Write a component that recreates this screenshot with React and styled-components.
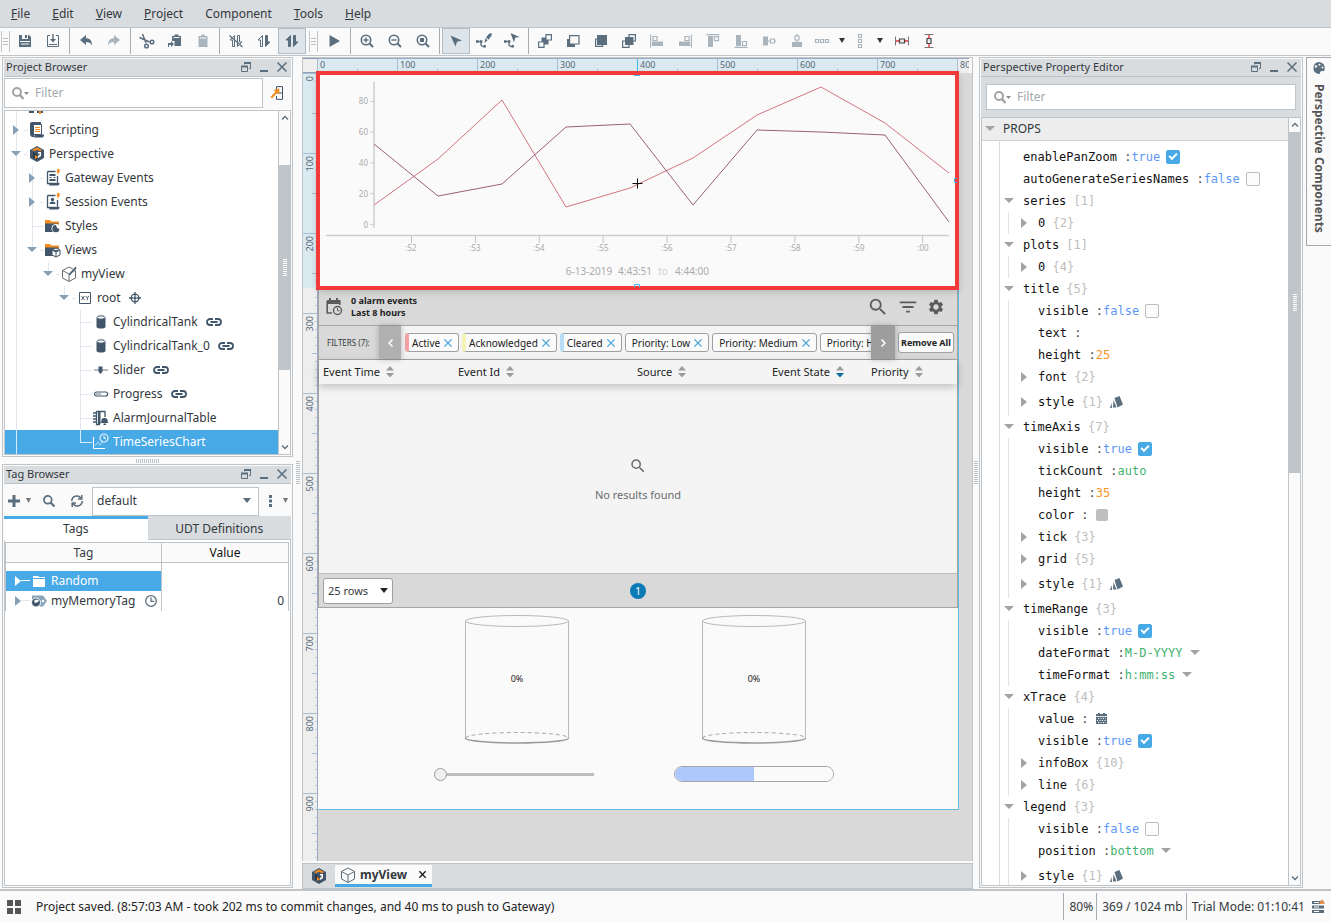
import React from "react";
import styled, { createGlobalStyle, css } from "styled-components";
import { MdSearch, MdFilterList, MdSettings } from "react-icons/md";

const c = {
  chrome: "#d9dcdf",
  panel: "#fafafa",
  line: "#bfc4c9",
  icon: "#5a6e7e",
  dark: "#41566a",
  pale: "#a9b4bd",
  orange: "#f38b1f",
  blue: "#47a9e6",
  text: "#33383d",
  guide: "#e3e6ee",
};

const GlobalStyle = createGlobalStyle`
  *, *::before, *::after { box-sizing: border-box; }
  body {
    margin: 0;
    background: ${c.panel};
    color: ${c.text};
    font-family: "Noto Sans", "Open Sans", sans-serif;
    font-size: 12px;
    line-height: 16px;
  }
  button, input, select { font: inherit; color: inherit; margin: 0; }
  button { border: 0; padding: 0; background: none; }
`;

/* ---------- icons ---------- */

const Svg = styled.svg`
  display: block;
  flex: none;
  overflow: visible;
`;

const Icon = ({ s = 16, color = c.icon, children }) => (
  <Svg width={s} height={s} viewBox="0 0 16 16" fill={color} aria-hidden="true">
    {children}
  </Svg>
);

const SaveIcon = () => (
  <Icon>
    <path d="M2 2h3v4h6V2h1l2 2v10H2z M8 2h2v3H8z" />
    <path d="M3 8.5h10" stroke="#fafafa" />
    <path d="M4 11h8" stroke="#fafafa" />
  </Icon>
);
const ImportIcon = () => (
  <Icon>
    <path d="M5 2.500H2.500v11h11v-11H11" fill="none" stroke={c.icon} />
    <path d="M7.300 1h1.400v5H11L8 9.500 5 6h2.300z M4 11h8v1H4z" />
  </Icon>
);
const UndoIcon = () => (
  <Icon>
    <path d="M2 7l6-5v3.200c4 0 6 2.500 6 7.300-1.500-2.600-3-3.500-6-3.500v3z" />
  </Icon>
);
const RedoIcon = () => (
  <Icon color={c.pale}>
    <path d="M14 7L8 2v3.200c-4 0-6 2.500-6 7.300 1.500-2.600 3-3.500 6-3.500v3z" />
  </Icon>
);
const CutIcon = () => (
  <Icon>
    <g fill="none" stroke={c.icon} strokeWidth="1.500">
      <path d="M3.500 1L7 10 M0.500 4.500L10.500 9" />
      <circle cx="13" cy="9" r="1.800" />
      <circle cx="7.500" cy="13" r="1.800" />
    </g>
  </Icon>
);
const CopyIcon = () => (
  <Icon>
    <path d="M5 3h2l1-1.500h3L12 3h2v10H7.500V8H5z" />
    <path d="M6.500 4.500h6" stroke="#fafafa" />
    <path d="M1 10h3V8l3 3-3 3v-2H2v2H1z" />
  </Icon>
);
const PasteIcon = () => (
  <Icon color={c.pale}>
    <path d="M3.500 3h2.500l.5-1.500h3L10 3h2.500v11h-9z" />
    <path d="M5 5h6" stroke="#fafafa" />
  </Icon>
);
const ArrowsIcon = ({ slash, fill }) => (
  <Icon>
    <path
      d="M6.500 2.500v11h-2V7H2z"
      fill={fill ? c.icon : "none"}
      stroke={c.icon}
      strokeLinejoin="round"
    />
    <path
      d="M9.500 13.500v-11h2V9H14z"
      fill={slash ? "none" : c.icon}
      stroke={c.icon}
      strokeLinejoin="round"
    />
    {slash && <path d="M1.500 2.500l13 11.500" stroke={c.icon} strokeWidth="1.300" />}
  </Icon>
);
const PlayIcon = () => (
  <Icon>
    <path d="M3.500 2l10.500 6-10.500 6z" />
  </Icon>
);
const ZoomIcon = ({ kind }) => (
  <Icon>
    <circle cx="7" cy="7" r="4.700" fill="none" stroke={c.icon} strokeWidth="1.600" />
    <path d="M10.500 10.500l3.500 3.500" stroke={c.icon} strokeWidth="2" />
    <path d={kind === "fit" ? "M5 5h4v4H5z" : "M4.500 6.300h5v1.400h-5z"} />
    {kind === "in" && <path d="M6.300 4.500h1.400v5H6.300z" />}
  </Icon>
);
const PointerIcon = () => (
  <Icon>
    <path d="M2.500 2.500l11.500 5-5 1.200L7.500 13.500z" />
  </Icon>
);
const PathIcon = ({ pen }) => (
  <Icon>
    <path d="M1 8.500h4v3.500q1 2 4 1.500" fill="none" stroke={c.icon} strokeWidth="1.400" />
    <path d="M0 7.300h2.400v2.400H0z M4 7.300h2.400v2.400H4z M7.500 12h2.400v2.600H7.500z" />
    {pen ? (
      <path d="M15.500 0l.3 2.200-3.300 4.500-2.500-2.200L13 .8z M9.300 5.300l2.300 2L8.500 10z" />
    ) : (
      <path d="M6.500 0l9 4-4.300.8L10 9.500z" />
    )}
  </Icon>
);
const StackIcon = ({ kind }) => {
  const hollow = { fill: "#fafafa", stroke: c.icon, strokeWidth: 1.2 };
  return (
    <Icon>
      {kind === "front" && (
        <>
          <path d="M4.500 4.500h7v7h-7z" />
          <path d="M9 1.600h5.400V7H9z M1.600 9H7v5.400H1.600z" {...hollow} />
        </>
      )}
      {kind === "up" && (
        <>
          <path d="M2 6h8v8H2z" />
          <path d="M4.600 2.600h9.400v8.400H4.600z" {...hollow} />
        </>
      )}
      {kind === "down" && (
        <>
          <path d="M2.600 6h7v7.400h-7z" {...hollow} />
          <path d="M4 2h10v10H4z" />
        </>
      )}
      {kind === "back" && (
        <>
          <path d="M8 1.600h6.400V8H8z M1.600 8H8v6.400H1.600z" {...hollow} />
          <path d="M4 4h8.500v8H4z" />
        </>
      )}
    </Icon>
  );
};
const AlignIcon = ({ kind }) => {
  const l = { fill: "none", stroke: c.pale, strokeWidth: 1.2 };
  const shapes = {
    left: ["M3 8.500h11V13H3z", "M1.600 1.500v13 M4 3.500h4v4H4z"],
    right: ["M2 8.500h11V13H2z", "M14.400 1.500v13 M8 3.500h4v4H8z"],
    top: ["M3 3h5v11H3z", "M1.500 1.600h13 M9.500 3.600h4v4h-4z"],
    bottom: ["M3 2h5v11H3z", "M1.500 14.400h13 M9.500 8.500h4v4h-4z"],
    middle: ["M2 3.500h5v9H2z", "M7 8h2 M9.500 6h4v4h-4z M13.500 8h1.500"],
    center: ["M3 9h10v5H3z", "M8 1v1.500 M6 3h4v4H6z M8 7v2"],
  };
  return (
    <Icon color={c.pale}>
      <path d={shapes[kind][0]} />
      <path d={shapes[kind][1]} {...l} />
    </Icon>
  );
};
const DistributeIcon = ({ vertical }) => (
  <Icon>
    <g
      fill="none"
      stroke={c.pale}
      strokeWidth="1.200"
      transform={vertical ? "rotate(90 8 8)" : undefined}
    >
      <path d="M1.500 6.500h3v3h-3z M6.500 6.500h3v3h-3z M11.500 6.500h3v3h-3z" />
    </g>
  </Icon>
);
const SizeIcon = ({ vertical }) => (
  <Icon>
    <g transform={vertical ? "rotate(90 8 8)" : undefined} fill="none">
      <path d="M1 8h4 M11 8h4" stroke="#f03030" strokeWidth="1.400" />
      <path d="M1.500 3.500v9 M14.500 3.500v9" stroke="#777" />
      <path d="M5.500 6h5v4h-5z" fill="#eee" stroke="#444" strokeWidth="1.200" />
    </g>
  </Icon>
);
const Caret = ({ color = "#8d8d8d", w = 8, dir = "down" }) => (
  <Svg width={dir === "right" ? 6 : w} height={dir === "right" ? 10 : 6} aria-hidden="true">
    <path
      d={dir === "right" ? "M0 0l6 5-6 5z" : `M0 0h${w}l-${w / 2} 5z`}
      fill={color}
    />
  </Svg>
);
const RestoreIcon = () => (
  <Svg width="10" height="10" fill="none" stroke={c.icon} aria-hidden="true">
    <path d="M0.500 4.500h6v5h-6z M3.500 .5v2 M9.500 1v5.500H8" />
    <path d="M0 4.500h7 M3 1h7" strokeWidth="2" />
  </Svg>
);
const MinimizeIcon = () => (
  <Svg width="8" height="10" aria-hidden="true">
    <path d="M0 8h8v2H0z" fill={c.icon} />
  </Svg>
);
const CloseIcon = ({ size = 10, color = c.icon, w = 1.5 }) => (
  <Svg width={size} height={size} viewBox="0 0 10 10" aria-hidden="true">
    <path d="M0.500 .5l9 9 M9.500 .5l-9 9" stroke={color} strokeWidth={w} />
  </Svg>
);
const FilterSearchIcon = () => (
  <Svg width="18" height="12" aria-hidden="true">
    <circle cx="5" cy="5" r="4" fill="none" stroke="#a3a3a3" strokeWidth="2" />
    <path d="M8 8l3.500 4" stroke="#a3a3a3" strokeWidth="2.500" />
    <path d="M12 5h5l-2.500 3z" fill="#8d8d8d" />
  </Svg>
);
const LinkIcon = () => (
  <Svg width="16" height="8" fill="none" stroke={c.dark} strokeWidth="1.800" aria-hidden="true">
    <path d="M7 1H4a3 3 0 0 0 0 6h3 M9 1h3a3 3 0 0 1 0 6H9 M4.500 4h7" />
  </Svg>
);
const JumpIcon = () => (
  <Icon>
    <path d="M6.500 6V1.600h6v12.800h-6V11 M6.500 8h6" fill="none" stroke={c.dark} />
    <path d="M9.500 3.500l-.5 6-1.700-1.800L2 13.500.5 12l5-5.500L3.500 5z" fill={c.orange} />
  </Icon>
);
const ScriptIcon = () => (
  <Icon color={c.dark}>
    <path d="M1 1.500Q1 0 3 0h9v12H5v3H3Q1 14 1 12z" />
    <path d="M4.500 2.500h8v10h-8z" fill="#fff" stroke={c.dark} />
    <path d="M6 5.500h5 M6 7.500h5 M6 9.500h5" stroke={c.orange} />
    <path d="M6 12.500h9q0 3-2 3H5z" />
  </Icon>
);
const PerspectiveIcon = () => (
  <Icon color={c.dark}>
    <path d="M8 0l7 4v8l-7 4-7-4V4z" />
    <path d="M8 1.200l5 2.800-2 1.200-3-1.500-3 1.500L3 4z" fill={c.orange} />
    <path d="M4 6l4 2v6L4 11.500z" fill="#26394a" />
    <path d="M6 8.500l3 3-3 1.500z" fill={c.orange} />
    <path d="M9 6h3v4l-3 2z" fill="#fff" />
    <path d="M8.500 7.500h2v2h-2z" fill={c.dark} />
  </Icon>
);
const EventsIcon = ({ session }) => (
  <Icon color={c.dark}>
    <path d="M2.500 1.500h8 M2.500 1.500v12h8 M12.500 6v7" fill="none" stroke={c.dark} strokeWidth="1.300" />
    <path d="M5 13h9.500q0 2.500-2 2.500H4z" />
    {session ? (
      <>
        <circle cx="7.500" cy="5.500" r="1.700" />
        <path d="M4.500 10q0-2.500 3-2.500t3 2.500z" />
      </>
    ) : (
      <path d="M4.500 4h6v2h-6z M4.500 7h2v1h-2z M8.500 7h2v1h-2z M4.500 9h6v2h-6z" />
    )}
    <path d="M12.500-1h2.500l-1 2h1.500L12 5l.7-2.800H11.500z" fill={c.orange} />
  </Icon>
);
const FolderIcon = ({ cube }) => (
  <Icon>
    <path d="M0 2h5l1 1.500h8V7H0z" fill={c.orange} />
    <path d="M0 5.500h13v8.500H0z" fill={c.dark} />
    {cube ? (
      <path
        d="M11 6l4 2v5l-4 2-4-2V8z M7 8l4 2 4-2 M11 10v5"
        fill="#fff"
        stroke={c.dark}
      />
    ) : (
      <>
        <circle cx="11" cy="10.500" r="4.500" fill="#fff" />
        <path d="M11 7a3.600 3.600 0 1 0 3.500 4L12 10z" fill={c.dark} />
      </>
    )}
  </Icon>
);
const CubeIcon = ({ pen }) => (
  <Icon>
    <path
      d="M8 1l6.500 3.500v7.500L8 15.500 1.500 12V4.500z M1.500 4.500L8 8l6.500-3.500 M8 8v7.500"
      fill="none"
      stroke={pen ? "#6d6d6d" : c.icon}
    />
    {pen && (
      <path d="M14.500 0.500L16 2 9 9.500l-2 .5.500-2z" fill={c.dark} stroke="#fff" strokeWidth=".5" />
    )}
  </Icon>
);
const RootIcon = () => (
  <Icon>
    <path d="M2.500 2.500h11v11h-11z" fill="#fff" stroke={c.dark} />
    <path
      d="M4.500 6l3 4 M7.500 6l-3 4 M8.800 6l1.500 2 1.500-2 M10.300 8v2.300"
      fill="none"
      stroke={c.dark}
      strokeWidth=".9"
    />
  </Icon>
);
const TargetIcon = () => (
  <Svg width="12" height="12" fill="none" stroke={c.dark} strokeWidth="1.300" aria-hidden="true">
    <circle cx="6" cy="6" r="3.800" />
    <circle cx="6" cy="6" r="1" />
    <path d="M6 0v4 M6 8v4 M0 6h4 M8 6h4" />
  </Svg>
);
const TankIcon = () => (
  <Icon>
    <path d="M3.500 4v8.500q0 2 4.500 2t4.500-2V4z" fill={c.dark} />
    <ellipse cx="8" cy="3.500" rx="4" ry="1.700" fill="#fff" stroke={c.dark} />
  </Icon>
);
const SliderIcon = () => (
  <Icon>
    <path d="M1 7h14v2H1z" fill="#b5bcc2" />
    <path d="M5.500 4.500h4v5l-2 2.500-2-2.500z" fill={c.dark} />
  </Icon>
);
const ProgressIcon = () => (
  <Icon>
    <rect x="1.600" y="6" width="13" height="4" rx="2" fill="#fff" stroke={c.dark} strokeWidth="1.200" />
    <path d="M3 7h5v2H3z" fill="#b5bcc2" />
  </Icon>
);
const AlarmIcon = () => (
  <Icon>
    <path d="M3.500 1.500h8.500V7 M3.500 1v13.500H7" fill="none" stroke={c.dark} strokeWidth="1.300" />
    <path d="M0 3h4 M0 6h4 M0 9h4 M0 12h4" stroke={c.dark} strokeWidth="1.300" />
    <path d="M5 2h2.500v12H5z M7.500 13q1-1 1-3 0-2 3-2t3 2q0 2 1 3z M10.500 13.500h2.500v1.500h-2.500z" fill={c.dark} />
  </Icon>
);
const ChartIcon = () => (
  <Icon>
    <path d="M0.500 3v11.500H12" fill="none" stroke="#fff" />
    <path d="M2 12l3-4 2 3 3-4" fill="none" stroke="#8ccbf2" strokeWidth="1.300" />
    <circle cx="11" cy="4" r="4" fill={c.blue} stroke="#e6f4fd" strokeWidth="1.200" />
    <path d="M11 1.500V4.300h2" fill="none" stroke="#fff" />
  </Icon>
);
const SpannerIcon = () => (
  <Icon color={c.dark}>
    <path d="M0 5h5v10H0z M8 5h6v10H8z" />
    <path d="M10 0h2v16h-2z" fill={c.orange} />
  </Icon>
);
const PlusIcon = () => (
  <Svg width="12" height="12" aria-hidden="true">
    <path d="M4.500 0h3v4.500H12v3H7.500V12h-3V7.500H0v-3h4.500z" fill={c.icon} />
  </Svg>
);
const MagnifierIcon = () => (
  <Svg width="12" height="12" fill="none" stroke={c.icon} aria-hidden="true">
    <circle cx="4.800" cy="4.800" r="3.900" strokeWidth="1.700" />
    <path d="M7.500 7.500l4 4" strokeWidth="2.200" />
  </Svg>
);
const RefreshIcon = () => (
  <Svg width="12" height="12" fill="none" stroke={c.icon} strokeWidth="1.500" aria-hidden="true">
    <path d="M0.800 6a5 5 0 0 1 9-3 M11.200 6a5 5 0 0 1-9 3 M10.800 0v4H7 M1.200 12V8H5" />
  </Svg>
);
const DotsIcon = () => (
  <Svg width="4" height="12" fill={c.icon} aria-hidden="true">
    <path d="M0 0h3v3H0z M0 4.500h3v3H0z M0 9h3v3H0z" />
  </Svg>
);
const ClosedFolderIcon = () => (
  <Icon color="#fff">
    <path d="M2 3h5l1 1h6v1H2z M2 6h12v8H2z" />
  </Icon>
);
const TagIcon = () => (
  <Icon color="#8aa6bd">
    <path d="M1 2.500h11l4 5.500-4 5.500H9L5 8 1 6z" />
    <circle cx="12" cy="8" r="1.200" fill="#fff" />
    <circle cx="5" cy="9.500" r="4.500" fill={c.dark} stroke="#fff" />
    <path d="M5 6.500l3 .5-1 2-3 1-1-2z" fill="#fff" />
  </Icon>
);
const ClockIcon = () => (
  <Svg width="12" height="12" fill="none" stroke={c.icon} strokeWidth="1.300" aria-hidden="true">
    <circle cx="6" cy="6" r="5.300" />
    <path d="M6 2.500V6.300h3" />
  </Svg>
);
const StyleIcon = () => (
  <Svg width="13" height="13" fill={c.icon} aria-hidden="true">
    <path d="M4.500 2L9.500 0 13 8.500 7.500 11.500z M3.500 4l3 7.500H3z M1.500 7l.5 5H0z" />
  </Svg>
);
const CalendarIcon = () => (
  <Svg width="12" height="12" aria-hidden="true">
    <path d="M0 1h11v10H0z M2 0h2v2H2z M7 0h2v2H7z" fill={c.icon} />
    <path d="M0 3.500h11" stroke="#dfe3e6" />
    <path
      d="M2 5.500h8 M1 7.500h9 M2 9.500h8"
      stroke="#fff"
      strokeWidth="1"
      strokeDasharray="1 1.500"
    />
  </Svg>
);
const PaletteIcon = () => (
  <Svg width="12" height="12" aria-hidden="true">
    <path d="M6 0a6 6 0 0 1 5.500 8q-.5 1.500-2 1Q7 8.500 7 11q-.3 1.500-2 .8A6 6 0 0 1 6 0z" fill={c.icon} />
    <circle cx="3" cy="4.500" r="1.200" fill="#fafafa" />
    <circle cx="6.500" cy="2.800" r="1" fill="#fafafa" />
    <circle cx="9.500" cy="5.500" r="1" fill="#fafafa" />
  </Svg>
);
const JournalIcon = () => (
  <Svg width="17" height="18" aria-hidden="true">
    <path d="M1.200 3h12.600v4 M1.200 3v12H6" fill="none" stroke="#5c5c5c" strokeWidth="1.600" />
    <path d="M1 2h13v4H1z M3 0h2v3H3z M10 0h2v3h-2z" fill="#5c5c5c" />
    <circle cx="11.500" cy="12.500" r="4" fill="#d9d9d9" stroke="#5c5c5c" strokeWidth="1.400" />
    <path d="M11.500 10v2.700h2" fill="none" stroke="#5c5c5c" />
  </Svg>
);
const SortIcon = ({ active }) => (
  <Svg width="8" height="12" aria-hidden="true">
    <path d="M4 0l4 4.500H0z" fill="#9b9b9b" />
    <path d="M0 7h8l-4 4.500z" fill={active ? "#0d6a9c" : "#9b9b9b"} />
  </Svg>
);
const ServerIcon = () => (
  <Svg width="13" height="13" aria-hidden="true">
    <path d="M0 1h12v3H0z M0 5.500h12v3H0z M0 10h12v3H0z" fill={c.icon} />
    <path d="M2 2.500h5 M2 7h5 M2 11.500h5" stroke="#fff" />
    <path d="M10-1l3 5H7z" fill="#e99148" />
  </Svg>
);
const WindowsIcon = () => (
  <Svg width="14" height="14" aria-hidden="true">
    <path d="M0 0h6v6H0z M8 0h6v6H8z M0 8h6v6H0z M8 8h6v6H8z" fill="#555" />
  </Svg>
);

/* ---------- shell ---------- */

const Shell = styled.div`
  display: flex;
  flex-direction: column;
  height: 100vh;
  overflow: hidden;
`;

const MenuBar = styled.nav`
  display: flex;
  flex: none;
  gap: 22px;
  height: 28px;
  padding: 0 11px;
  background: ${c.chrome};
  border-bottom: 1px solid ${c.line};
`;
const MenuButton = styled.button`
  &::first-letter {
    text-decoration: ${(p) => (p.$plain ? "none" : "underline")};
  }
`;

const Toolbar = styled.div`
  display: flex;
  flex: none;
  height: 28px;
  background: ${c.panel};
  border-bottom: 1px solid ${c.line};
`;
const ToolButton = styled.button`
  display: flex;
  flex: none;
  align-items: center;
  justify-content: center;
  width: ${(p) => p.$w || 28}px;
  height: 26px;
  ${(p) =>
    p.$on &&
    css`
      background: #dde4ea;
      border: 1px solid #b4bcc3;
    `}
`;
const ToolRule = styled.span`
  flex: none;
  width: 1px;
  height: 26px;
  margin: 0 2px;
  background: #a9adb1;
`;
const Handle = styled.span`
  flex: none;
  width: ${(p) => p.$w}px;
  display: flex;
  align-items: center;
  justify-content: center;
  &::before {
    content: "";
    width: 9px;
    height: 21px;
    border: solid ${c.line};
    border-width: 0 1px;
    background: repeating-linear-gradient(#b9bec3 0 1px, transparent 1px 3px) center / 5px 7px no-repeat;
  }
`;

const Main = styled.main`
  display: flex;
  flex: 1;
  min-height: 0;
  border-bottom: 2px solid ${c.line};
`;
const LeftColumn = styled.div`
  display: flex;
  flex-direction: column;
  flex: none;
  width: 293px;
  padding: 1px 0 1px 2px;
`;
const Grip = styled.div`
  flex: none;
  display: flex;
  align-items: center;
  justify-content: center;
  width: ${(p) => (p.$row ? "auto" : p.$w + "px")};
  height: ${(p) => (p.$row ? "7px" : "auto")};
  &::before {
    content: "";
    width: ${(p) => (p.$row ? 23 : 4)}px;
    height: ${(p) => (p.$row ? 4 : 23)}px;
    background: repeating-linear-gradient(
      ${(p) => (p.$row ? "90deg" : "180deg")},
      #bcc1c6 0 1px,
      transparent 1px 2px
    );
  }
`;

const Panel = styled.section`
  display: flex;
  flex-direction: column;
  flex: ${(p) => p.$flex || "none"};
  width: ${(p) => (p.$w ? p.$w + "px" : "auto")};
  min-height: 0;
  border: 1px solid ${c.line};
  background: ${c.panel};
  padding: 1px;
`;
const PanelHeader = styled.header`
  display: flex;
  flex: none;
  align-items: center;
  gap: 9px;
  height: 18px;
  padding: 0 4px 1px 2px;
  background: ${c.chrome};
  border-bottom: 1px solid ${c.line};
`;
const PanelTitle = styled.h2`
  flex: 1;
  margin: 0;
  font-size: 11px;
  font-weight: 400;
`;
const WindowButton = styled.button`
  display: flex;
`;
const Header = ({ title }) => (
  <PanelHeader>
    <PanelTitle>{title}</PanelTitle>
    <WindowButton aria-label="Float"><RestoreIcon /></WindowButton>
    <WindowButton aria-label="Minimize"><MinimizeIcon /></WindowButton>
    <WindowButton aria-label="Close"><CloseIcon /></WindowButton>
  </PanelHeader>
);

const FilterRow = styled.div`
  display: flex;
  flex: none;
  align-items: center;
  gap: 7px;
  padding: ${(p) => p.$pad || "1px 5px 2px 0"};
  background: ${(p) => p.$bg || "transparent"};
`;
const FilterBox = styled.label`
  display: flex;
  flex: 1;
  align-items: center;
  gap: 5px;
  min-width: 0;
  height: ${(p) => p.$h}px;
  padding: 0 7px;
  background: #fff;
  border: 1px solid ${c.line};
`;
const FilterInput = styled.input`
  flex: 1;
  min-width: 0;
  padding: 0;
  border: 0;
  outline: 0;
  background: none;
  &::placeholder {
    color: #a3a9ae;
    opacity: 1;
  }
`;

/* ---------- project tree ---------- */

const ScrollFrame = styled.div`
  display: flex;
  flex: 1;
  min-height: 0;
  background: #fff;
  border: 1px solid ${c.line};
`;
const Tree = styled.ul`
  display: flex;
  flex: 1;
  flex-direction: column;
  justify-content: flex-end;
  min-width: 0;
  margin: 0;
  padding: 0;
  overflow: hidden;
  list-style: none;
`;
const TreeItem = styled.li`
  display: flex;
  flex: none;
  align-items: center;
  height: 24px;
  padding-left: 3px;
  --guide: ${(p) => (p.$on ? "#d4ecfb" : c.guide)};
  background: ${(p) => (p.$on ? c.blue : "transparent")};
  color: ${(p) => (p.$on ? "#fff" : c.text)};
`;
const GuideCell = styled.span`
  display: flex;
  align-items: center;
  justify-content: center;
  flex: none;
  width: 16px;
  height: 24px;
  background: ${(p) =>
    p.$line
      ? `linear-gradient(var(--guide), var(--guide)) 8px 0 / 1px ${
          p.$line === "full" ? "100%" : "12px"
        } no-repeat`
      : "none"};
`;
const Stub = styled.span`
  flex: none;
  width: ${(p) => (p.$leaf ? 12 : 4)}px;
  height: 1px;
  margin: 0 1px 0 ${(p) => (p.$leaf ? -8 : 0)}px;
  background: var(--guide);
`;
const TreeLabel = styled.span`
  display: flex;
  align-items: center;
  gap: 8px;
  padding-left: 4px;
`;

const tree = [
  { level: 0, icon: <SpannerIcon />, label: "", line: "full" },
  { level: 0, icon: <ScriptIcon />, label: "Scripting", line: "full", arrow: "right" },
  { level: 0, icon: <PerspectiveIcon />, label: "Perspective", line: "full", arrow: "down" },
  { level: 1, icon: <EventsIcon />, label: "Gateway Events", line: "full", arrow: "right" },
  { level: 1, icon: <EventsIcon session />, label: "Session Events", line: "full", arrow: "right" },
  { level: 1, icon: <FolderIcon />, label: "Styles", line: "full" },
  { level: 1, icon: <FolderIcon cube />, label: "Views", line: "half", arrow: "down" },
  { level: 2, icon: <CubeIcon pen />, label: "myView", line: "half", arrow: "down" },
  { level: 3, icon: <RootIcon />, label: "root", line: "half", arrow: "down", after: <TargetIcon /> },
  { level: 4, icon: <TankIcon />, label: "CylindricalTank", line: "full", after: <LinkIcon /> },
  { level: 4, icon: <TankIcon />, label: "CylindricalTank_0", line: "full", after: <LinkIcon /> },
  { level: 4, icon: <SliderIcon />, label: "Slider", line: "full", after: <LinkIcon /> },
  { level: 4, icon: <ProgressIcon />, label: "Progress", line: "full", after: <LinkIcon /> },
  { level: 4, icon: <AlarmIcon />, label: "AlarmJournalTable", line: "full" },
  { level: 4, icon: <ChartIcon />, label: "TimeSeriesChart", line: "half", on: true },
];

const ScrollBar = styled.div`
  display: flex;
  flex: none;
  flex-direction: column;
  width: 12px;
  background: ${c.panel};
  border-left: 1px solid ${c.line};
`;
const ScrollButton = styled.button`
  display: flex;
  flex: none;
  align-items: center;
  justify-content: center;
  height: 14px;
`;
const ScrollGap = styled.div`
  flex: ${(p) => p.$grow} 0 0;
`;
const Thumb = styled.div`
  flex: ${(p) => p.$grow} 0 0;
  background: repeating-linear-gradient(#fff 0 1px, transparent 1px 2px) center / 4px 17px no-repeat,
    #bfc5c9;
`;
const Chevron = ({ up }) => (
  <Svg width="6" height="4" fill="none" stroke={c.icon} strokeWidth="1.300" aria-hidden="true">
    <path d={up ? "M0 3.500l3-3 3 3" : "M0 .5l3 3 3-3"} />
  </Svg>
);
const Scroll = ({ before, thumb, after }) => (
  <ScrollBar>
    <ScrollButton aria-label="Scroll up"><Chevron up /></ScrollButton>
    <ScrollGap $grow={before} />
    <Thumb $grow={thumb} />
    <ScrollGap $grow={after} />
    <ScrollButton aria-label="Scroll down"><Chevron /></ScrollButton>
  </ScrollBar>
);

/* ---------- tag browser ---------- */

const TagTools = styled.div`
  display: flex;
  flex: none;
  align-items: center;
  height: 32px;
  padding: 2px 1px 0 4px;
`;
const TagTool = styled.button`
  display: flex;
  align-items: center;
  gap: 6px;
  margin-right: ${(p) => p.$gap || 0}px;
`;
const MoreButton = styled.button`
  display: flex;
  align-items: center;
  gap: 10px;
  padding: 0 2px 0 10px;
`;
const SelectWrap = styled.span`
  display: flex;
  flex: ${(p) => (p.$w ? "none" : 1)};
  align-items: center;
  width: ${(p) => (p.$w ? p.$w + "px" : "auto")};
  height: ${(p) => p.$h}px;
  padding-right: ${(p) => p.$pr}px;
  background: #fff;
  border: 1px solid ${(p) => p.$line || c.line};
  border-radius: ${(p) => p.$r || 0}px;
`;
const Select = styled.select`
  flex: 1;
  min-width: 0;
  padding: 0 0 0 4px;
  border: 0;
  outline: 0;
  background: none;
  appearance: none;
  font-size: ${(p) => p.$size || 12}px;
`;
const Tabs = styled.div`
  display: flex;
  flex: none;
`;
const Tab = styled.button`
  flex: 1;
  height: 24px;
  background: ${(p) => (p.$on ? "#fff" : c.chrome)};
  border-top: 3px solid ${(p) => (p.$on ? c.blue : c.chrome)};
  border-bottom: 1px solid ${(p) => (p.$on ? "#fff" : c.line)};
  line-height: 18px;
`;
const TagArea = styled.div`
  flex: 1;
  padding: 2px 1px 0 0;
  background: #fff;
  border: 1px solid ${c.line};
  border-top: 0;
`;
const TagTable = styled.table`
  width: 100%;
  border-collapse: collapse;
  table-layout: fixed;
`;
const TagHead = styled.th`
  width: ${(p) => (p.$w ? p.$w + "px" : "auto")};
  height: 20px;
  padding: 0;
  border: 1px solid ${c.line};
  font-weight: 400;
  line-height: 18px;
  background: ${c.panel};
  color: ${(p) => (p.$w ? c.text : "#111")};
`;
const TagCell = styled.td`
  height: ${(p) => p.$h || 20}px;
  padding: 0 ${(p) => (p.$right ? 4 : 0)}px 0 0;
  border: solid ${c.line};
  border-width: 0 1px;
  text-align: ${(p) => (p.$right ? "right" : "left")};
  background: ${(p) => (p.$on ? c.blue : "#fff")};
  color: ${(p) => (p.$on ? "#fff" : c.text)};
  --guide: ${(p) => (p.$on ? "#fff" : c.guide)};
`;
const TagName = styled.span`
  display: flex;
  align-items: center;
  gap: 4px;
  padding-left: 9px;
`;
const TagDash = styled.span`
  width: 9px;
  height: 1px;
  margin: 0 -3px 0 -4px;
  background: var(--guide);
`;
const TagText = styled.span`
  margin-right: 6px;
`;

/* ---------- designer canvas ---------- */

const Designer = styled.section`
  display: flex;
  flex: 1;
  flex-direction: column;
  min-width: 0;
  padding-top: 1px;
`;
const CanvasGrid = styled.div`
  display: grid;
  grid-template-columns: 15px 1fr;
  grid-template-rows: 15px 1fr;
  flex: 1;
  min-height: 0;
  overflow: hidden;
  border: solid ${c.line};
  border-width: 1px 1px 0 1px;
`;
const Corner = styled.div`
  background: #eee;
  border: solid #8f9db8;
  border-width: 1px 0 1px 0;
`;
const RulerTop = styled.div`
  display: flex;
  overflow: hidden;
  margin: 0 3px 0 -1px;
  background: #eee;
  border-top: 1px solid #9caac4;
`;
const RulerLeft = styled.div`
  display: flex;
  flex-direction: column;
  overflow: hidden;
  background: linear-gradient(#dbe9f0 215px, #eee 215px);
  border-right: 1px solid #9caac4;
`;
const TopMark = styled.span`
  flex: none;
  width: 80px;
  height: 14px;
  padding-left: 2px;
  border-left: 1px solid ${(p) => (p.$hot ? "#3fb6f0" : "#a9bdd0")};
  background: linear-gradient(#a9bdd0, #a9bdd0) 39px 100% / 1px 4px no-repeat,
    ${(p) => (p.$off ? "#eee" : "#dbe9f0")};
  color: #55697a;
  font-size: 9px;
  line-height: 11px;
`;
const LeftMark = styled.span`
  flex: none;
  display: flex;
  justify-content: center;
  height: 80px;
  padding-top: 2px;
  border-top: 1px solid #a9bdd0;
  background: linear-gradient(#a9bdd0, #a9bdd0) 100% 39px / 5px 1px no-repeat,
    repeating-linear-gradient(transparent 0 7px, #b9c9d8 7px 8px) 100% 0 / 2px 100% no-repeat;
  color: #55697a;
  font-size: 9px;
  line-height: 14px;
`;
const Upright = styled.span`
  writing-mode: vertical-rl;
  transform: rotate(180deg);
  align-self: flex-start;
`;
const Workspace = styled.div`
  background: #d9d9d9;
  min-width: 0;
`;
const Artboard = styled.div`
  width: 641px;
  height: 737px;
  background: #fafafa;
  border: solid #68bce2;
  border-width: 0 1px 1px 0;
`;
const ChartBox = styled.div`
  position: relative;
  height: 215px;
  z-index: 1;
  box-shadow: 0 3px 8px rgba(0, 0, 0, 0.2);
`;
const Outline = styled.div`
  position: absolute;
  inset: -2px -1px -2px -2px;
  border: 4px solid #f23a39;
`;
const ChartText = styled.text`
  fill: ${(p) => p.$fill || "#aaa"};
  font-size: ${(p) => p.$size || 8}px;
  text-anchor: ${(p) => p.$anchor || "middle"};
`;

const purple = "56,71 120,123 184,111 248,54 312,51 375,132 439,57 503,59 567,62 631,149";
const red = "56,132 120,86 184,27 248,134 312,115 375,85 439,42 503,14 567,50 631,100";

const Chart = () => (
  <ChartBox>
    <Svg width="640" height="215" role="img" aria-label="Time series chart">
      <rect width="640" height="215" fill="#fafafa" />
      <path d="M56 9v146 M8 162.500h623" stroke="#cdcdcd" strokeWidth="1.500" fill="none" />
      {[80, 60, 40, 20, 0].map((v, i) => (
        <g key={v}>
          <path d={`M52 ${28.500 + i * 30.700}h4`} stroke="#cdcdcd" />
          <ChartText x="50" y={31 + i * 31} $anchor="end">{v}</ChartText>
        </g>
      ))}
      {["52", "53", "54", "55", "56", "57", "58", "59", "00"].map((v, i) => (
        <g key={v}>
          <path d={`M${93.500 + i * 63.900} 163v7`} stroke="#c4c4c4" />
          <ChartText x={93 + i * 64} y="178">:{v}</ChartText>
        </g>
      ))}
      <polyline points={red} fill="none" stroke="#d4747f" />
      <polyline points={purple} fill="none" stroke="#9a5f78" />
      <ChartText x="271" y="202" $size="10">6-13-2019</ChartText>
      <ChartText x="317" y="202" $size="10">4:43:51</ChartText>
      <ChartText x="345" y="202" $size="10" $fill="#d0d0d0">to</ChartText>
      <ChartText x="374" y="202" $size="10">4:44:00</ChartText>
      <path d="M319.500 105.500v10 M314.500 110.500h10" stroke="#111" />
    </Svg>
    <Outline />
    <Handles width="640" height="215" aria-hidden="true">
      <path d="M316.500 214.500v-3h5v3 M639 105.500h-2.500v4h2.500 M316 2.500h6" fill="none" stroke="#3fb6f0" />
    </Handles>
  </ChartBox>
);

const Handles = styled.svg`
  position: absolute;
  inset: 0;
`;

const Alarm = styled.div`
  display: flex;
  flex-direction: column;
  height: 320px;
  background: #f4f4f4;
  border: 1px solid #a5a5a5;
  border-width: 0 1px 1px 1px;
`;
const AlarmHead = styled.div`
  display: flex;
  flex: none;
  align-items: center;
  gap: 8px;
  height: 38px;
  padding: 0 12px 0 7px;
  background: #d9d9d9;
  border-bottom: 1px solid #a5a5a5;
`;
const AlarmTitle = styled.p`
  flex: 1;
  margin: 0;
  color: #222;
  font-size: 9px;
  font-weight: 700;
  line-height: 12px;
`;
const RoundButton = styled.button`
  display: flex;
  color: #5c5c5c;
`;
const Filters = styled.div`
  display: flex;
  flex: none;
  align-items: center;
  height: 34px;
  border-bottom: 1px solid #a5a5a5;
`;
const FilterCount = styled.span`
  display: flex;
  flex: none;
  align-items: center;
  width: 60px;
  height: 33px;
  padding-left: 8px;
  background: #d9d9d9;
  font-size: 8px;
  white-space: nowrap;
`;
const Pager = styled.button`
  display: flex;
  flex: none;
  align-items: center;
  justify-content: center;
  width: ${(p) => p.$w}px;
  height: 33px;
  background: ${(p) => p.$bg};
  box-shadow: 0 0 6px rgba(0, 0, 0, 0.25);
  z-index: 1;
`;
const Chips = styled.div`
  display: flex;
  flex: 1;
  gap: 3px;
  min-width: 0;
  padding-left: 4px;
  overflow: hidden;
`;
const Chip = styled.span`
  display: flex;
  flex: none;
  align-items: center;
  gap: 4px;
  height: 19px;
  padding: 0 6px 0 ${(p) => (p.$tint ? 3 : 6)}px;
  border: 1px solid #a0a0a0;
  border-left: ${(p) => (p.$tint ? `4px solid ${p.$tint}` : "1px solid #a0a0a0")};
  border-radius: 3px;
  background: #fafafa;
  color: #222;
  font-size: 10px;
  white-space: nowrap;
`;
const ChipClose = styled.button`
  display: flex;
`;
const RemoveWrap = styled.div`
  display: flex;
  flex: none;
  align-items: center;
  height: 33px;
  padding: 0 3px;
  background: #d9d9d9;
`;
const RemoveButton = styled.button`
  width: 56px;
  height: 21px;
  border: 1px solid #a0a0a0;
  border-radius: 3px;
  background: #fafafa;
  color: #222;
  font-size: 9px;
  font-weight: 700;
  white-space: nowrap;
`;
const EventTable = styled.table`
  flex: none;
  width: 100%;
  border-collapse: collapse;
  table-layout: fixed;
  box-shadow: 0 3px 8px rgba(0, 0, 0, 0.22);
`;
const EventHead = styled.th`
  width: ${(p) => (p.$w ? p.$w + "px" : "auto")};
  height: 24px;
  padding: 0 0 0 4px;
  color: #222;
  font-size: 11px;
  font-weight: 400;
  text-align: left;
`;
const HeadLabel = styled.span`
  display: flex;
  align-items: center;
  gap: 6px;
`;
const Empty = styled.div`
  display: flex;
  flex: 1;
  flex-direction: column;
  align-items: center;
  justify-content: center;
  gap: 12px;
  padding-top: 2px;
  color: #6b6b6b;
  font-size: 11px;
`;
const AlarmFoot = styled.div`
  display: grid;
  grid-template-columns: 1fr auto 1fr;
  flex: none;
  align-items: center;
  height: 34px;
  padding: 0 4px;
  background: #d9d9d9;
  border-top: 1px solid #bdbdbd;
`;
const PageButton = styled.button`
  width: 16px;
  height: 16px;
  border-radius: 8px;
  background: #0d7ab8;
  color: #fff;
  font-size: 10px;
  line-height: 16px;
`;
const TankRow = styled.div`
  display: flex;
  gap: 133px;
  padding: 7px 0 0 147px;
`;
const ControlRow = styled.div`
  display: flex;
  align-items: center;
  gap: 80px;
  padding: 22px 0 0 116px;
`;
const Range = styled.input`
  width: 160px;
  height: 16px;
  appearance: none;
  background: linear-gradient(#bdbdbd, #bdbdbd) center / 100% 3px no-repeat;
  &::-webkit-slider-thumb {
    appearance: none;
    width: 13px;
    height: 13px;
    border: 1px solid #9c9c9c;
    border-radius: 50%;
    background: #f0f0f0;
  }
`;
const Meter = styled.progress`
  width: 160px;
  height: 16px;
  appearance: none;
  overflow: hidden;
  border: 1px solid #a5a5a5;
  border-radius: 8px;
  &::-webkit-progress-bar {
    background: #fafafa;
  }
  &::-webkit-progress-value {
    background: #adc8fb;
  }
`;
const Tank = () => (
  <Svg width="104" height="129" fill="none" stroke="#b9b9b9" role="img" aria-label="Tank level">
    <ellipse cx="52" cy="6" rx="51.500" ry="5.500" />
    <path d="M0.500 6v117 M103.500 6v117" />
    <path d="M0.500 123a51.500 5.500 0 0 1 103 0" strokeDasharray="4 3" stroke="#a5a5a5" />
    <path d="M0.500 123a51.500 5 0 0 0 103 0" stroke="#9a9a9a" strokeWidth="1.500" />
    <ChartText x="52" y="67" $size="9" $fill="#222" stroke="none">0%</ChartText>
  </Svg>
);

const ViewTabs = styled.div`
  display: flex;
  flex: none;
  align-items: stretch;
  height: 26px;
  margin-top: 2px;
  padding: 1px 0 1px 8px;
  background: ${c.chrome};
  border: 1px solid ${c.line};
`;
const HomeTab = styled.button`
  display: flex;
  align-items: center;
  width: 24px;
`;
const ViewTab = styled.button`
  display: flex;
  align-items: center;
  gap: 4px;
  padding: 0 6px 0 5px;
  background: ${c.panel};
  border-bottom: 3px solid ${c.blue};
  font-weight: 700;
`;
const TabClose = styled.span`
  margin-left: 8px;
`;

/* ---------- property editor ---------- */

const RightColumn = styled.div`
  display: flex;
  flex: none;
  padding: 1px 0;
`;
const Props = styled.div`
  flex: 1;
  min-width: 0;
  overflow: hidden;
  background: #fff;
`;
const PropsHead = styled.div`
  display: flex;
  align-items: center;
  gap: 8px;
  height: 23px;
  padding-left: 3px;
  background: #ededed;
  border-bottom: 1px solid #d4d4d4;
`;
const PropsBody = styled.div`
  min-height: 100%;
  margin-left: 17px;
  padding-top: 5px;
  border-left: 1px solid #dcdcdc;
  font-family: "DejaVu Sans Mono", "Liberation Mono", monospace;
`;
const PropRow = styled.div`
  display: flex;
  align-items: center;
  height: ${(p) => (p.$tall ? 28 : 22)}px;
  padding-left: ${(p) => (p.$sub ? 15 : 0)}px;
  background: ${(p) =>
    p.$sub ? "linear-gradient(#e2e2e2, #e2e2e2) 8px 0 / 1px 100% no-repeat" : "none"};
`;
const Arrow = styled.span`
  display: flex;
  flex: none;
  justify-content: center;
  width: 18px;
  margin-right: 5px;
`;
const PropName = styled.label`
  color: #111;
  white-space: pre;
`;
const PropValue = styled.span`
  color: ${(p) => p.$color};
  white-space: pre;
`;
const After = styled.span`
  display: flex;
  margin-left: 7px;
`;
const Check = styled.input`
  appearance: none;
  flex: none;
  width: 14px;
  height: 14px;
  margin: 0 0 0 6px;
  border: 1px solid #bdbdbd;
  border-radius: 2px;
  background: #fcfcfc;
  &:checked {
    border-color: ${c.blue};
    background: ${c.blue};
  }
  &:checked::before {
    content: "";
    display: block;
    width: 8px;
    height: 5px;
    margin: 2px;
    border: solid #fff;
    border-width: 0 0 2px 2px;
    transform: rotate(-45deg);
  }
`;
const Swatch = styled.span`
  width: 12px;
  height: 12px;
  border-radius: 2px;
  background: #bfbfbf;
`;

const props = [
  { n: "enablePanZoom", v: true },
  { n: "autoGenerateSeriesNames", v: false },
  { n: "series", c: "[1]", a: "down" },
  { n: "0", c: "{2}", a: "right", sub: 1 },
  { n: "plots", c: "[1]", a: "down" },
  { n: "0", c: "{4}", a: "right", sub: 1 },
  { n: "title", c: "{5}", a: "down" },
  { n: "visible", v: false, sub: 1 },
  { n: "text", v: "", sub: 1 },
  { n: "height", v: 25, sub: 1 },
  { n: "font", c: "{2}", a: "right", sub: 1 },
  { n: "style", c: "{1}", a: "right", sub: 1, tall: 1 },
  { n: "timeAxis", c: "{7}", a: "down" },
  { n: "visible", v: true, sub: 1 },
  { n: "tickCount", v: "auto", sub: 1 },
  { n: "height", v: 35, sub: 1 },
  { n: "color", v: "", sub: 1, after: <Swatch /> },
  { n: "tick", c: "{3}", a: "right", sub: 1 },
  { n: "grid", c: "{5}", a: "right", sub: 1 },
  { n: "style", c: "{1}", a: "right", sub: 1, tall: 1 },
  { n: "timeRange", c: "{3}", a: "down" },
  { n: "visible", v: true, sub: 1 },
  { n: "dateFormat", v: "M-D-YYYY", sub: 1, pick: 1 },
  { n: "timeFormat", v: "h:mm:ss", sub: 1, pick: 1 },
  { n: "xTrace", c: "{4}", a: "down" },
  { n: "value", v: "", sub: 1, after: <CalendarIcon /> },
  { n: "visible", v: true, sub: 1 },
  { n: "infoBox", c: "{10}", a: "right", sub: 1 },
  { n: "line", c: "{6}", a: "right", sub: 1 },
  { n: "legend", c: "{3}", a: "down" },
  { n: "visible", v: false, sub: 1 },
  { n: "position", v: "bottom", sub: 1, pick: 1 },
  { n: "style", c: "{1}", a: "right", sub: 1, tall: 1 },
];
const valueColor = (v) =>
  typeof v === "boolean" ? "#5e98f5" : typeof v === "number" ? "#f7952b" : "#43b36f";

const Property = ({ item, id }) => (
  <PropRow $sub={item.sub} $tall={item.tall}>
    <Arrow>
      {item.a && <Caret dir={item.a} w={10} color="#a3a3a3" />}
    </Arrow>
    <PropName htmlFor={typeof item.v === "boolean" ? id : undefined}>{item.n} </PropName>
    {item.c && <PropValue $color="#bdbdbd">{item.c}</PropValue>}
    {item.v !== undefined && (
      <PropValue $color="#444">:</PropValue>
    )}
    {item.v !== undefined && (
      <PropValue $color={valueColor(item.v)}>{String(item.v)}</PropValue>
    )}
    {typeof item.v === "boolean" && (
      <Check id={id} type="checkbox" defaultChecked={item.v} />
    )}
    {item.pick && <After><Caret w={10} color="#a3a3a3" /></After>}
    {item.tall && <After><StyleIcon /></After>}
    {item.after && <After>{item.after}</After>}
  </PropRow>
);

const Side = styled.aside`
  flex: none;
  width: 28px;
  padding: 1px 0 0 3px;
`;
const SideTab = styled.button`
  display: flex;
  flex-direction: column;
  align-items: center;
  gap: 10px;
  width: 25px;
  height: 189px;
  padding-top: 4px;
  border: 1px solid #a5a9ad;
  border-right: 0;
  color: #555;
  font-weight: 700;
`;
const SideText = styled.span`
  writing-mode: vertical-rl;
  white-space: nowrap;
`;

const StatusBar = styled.footer`
  display: flex;
  flex: none;
  align-items: center;
  height: 31px;
  padding: 0 3px 0 7px;
  background: ${c.panel};
`;
const StatusText = styled.span`
  flex: 1;
  padding-left: 15px;
  white-space: nowrap;
  color: #222;
`;
const StatusItem = styled.span`
  display: flex;
  align-items: center;
  gap: 7px;
  height: 27px;
  padding: 0 3px 0 5px;
  border-left: 1px solid #a9adb1;
  white-space: nowrap;
`;

const menus = ["File", "Edit", "View", "Project", "Component", "Tools", "Help"];
const chips = [
  ["Active", "#f3a3a3"],
  ["Acknowledged", "#f3f3b4"],
  ["Cleared", "#b9dcf7"],
  ["Priority: Low"],
  ["Priority: Medium"],
  ["Priority: High"],
];
const columns = [
  ["Event Time", 135],
  ["Event Id", 179],
  ["Source", 135],
  ["Event State", 99],
  ["Priority"],
];
const marks = [0, 100, 200, 300, 400, 500, 600, 700, 800, 900];

export default function App() {
  return (
    <Shell>
      <GlobalStyle />
      <MenuBar>
        {menus.map((m) => (
          <MenuButton key={m} $plain={m === "Component"}>{m}</MenuButton>
        ))}
      </MenuBar>
      <Toolbar>
        <Handle $w={11} />
        <ToolButton aria-label="Save"><SaveIcon /></ToolButton>
        <ToolButton aria-label="Import"><ImportIcon /></ToolButton>
        <ToolRule />
        <ToolButton aria-label="Undo"><UndoIcon /></ToolButton>
        <ToolButton aria-label="Redo"><RedoIcon /></ToolButton>
        <ToolRule />
        <ToolButton aria-label="Cut"><CutIcon /></ToolButton>
        <ToolButton aria-label="Copy"><CopyIcon /></ToolButton>
        <ToolButton aria-label="Paste"><PasteIcon /></ToolButton>
        <ToolRule />
        <ToolButton aria-label="Comm off"><ArrowsIcon slash /></ToolButton>
        <ToolButton aria-label="Comm read-only"><ArrowsIcon /></ToolButton>
        <ToolButton aria-label="Comm read/write" $on><ArrowsIcon fill /></ToolButton>
        <Handle $w={14} />
        <ToolButton aria-label="Preview"><PlayIcon /></ToolButton>
        <ToolRule />
        <ToolButton aria-label="Zoom in"><ZoomIcon kind="in" /></ToolButton>
        <ToolButton aria-label="Zoom out"><ZoomIcon kind="out" /></ToolButton>
        <ToolButton aria-label="Zoom to fit"><ZoomIcon kind="fit" /></ToolButton>
        <ToolRule />
        <ToolButton aria-label="Select" $on><PointerIcon /></ToolButton>
        <ToolButton aria-label="Draw path"><PathIcon pen /></ToolButton>
        <ToolButton aria-label="Edit path"><PathIcon /></ToolButton>
        <ToolRule />
        {["front", "up", "down", "back"].map((k) => (
          <ToolButton key={k} aria-label={`Order ${k}`}><StackIcon kind={k} /></ToolButton>
        ))}
        {["left", "right", "top", "bottom", "middle", "center"].map((k) => (
          <ToolButton key={k} aria-label={`Align ${k}`}><AlignIcon kind={k} /></ToolButton>
        ))}
        <ToolButton aria-label="Distribute horizontally" $w={22}><DistributeIcon /></ToolButton>
        <ToolButton aria-label="Horizontal options" $w={18}><Caret w={6} color="#333" /></ToolButton>
        <ToolButton aria-label="Distribute vertically" $w={18}><DistributeIcon vertical /></ToolButton>
        <ToolButton aria-label="Vertical options" $w={22}><Caret w={6} color="#333" /></ToolButton>
        <ToolButton aria-label="Same width" $w={22}><SizeIcon /></ToolButton>
        <ToolButton aria-label="Same height" $w={32}><SizeIcon vertical /></ToolButton>
      </Toolbar>

      <Main>
        <LeftColumn>
          <Panel $flex="401 0 0">
            <Header title="Project Browser" />
            <FilterRow>
              <FilterBox $h={30}>
                <FilterSearchIcon />
                <FilterInput aria-label="Filter project" placeholder="Filter" />
              </FilterBox>
              <WindowButton aria-label="Locate"><JumpIcon /></WindowButton>
            </FilterRow>
            <ScrollFrame>
              <Tree>
                {tree.map((t, i) => (
                  <TreeItem key={i} $on={t.on}>
                    {Array.from({ length: t.level }, (_, k) => (
                      <GuideCell key={k} $line={k === 0 ? "full" : undefined} />
                    ))}
                    <GuideCell $line={t.line}>
                      {t.arrow && <Caret dir={t.arrow} w={10} color="#86a0b8" />}
                    </GuideCell>
                    <Stub $leaf={!t.arrow} />
                    {t.icon}
                    <TreeLabel>{t.label}{t.after}</TreeLabel>
                  </TreeItem>
                ))}
              </Tree>
              <Scroll before={40} thumb={204} after={70} />
            </ScrollFrame>
          </Panel>
          <Grip $row />
          <Panel $flex="425 0 0">
            <Header title="Tag Browser" />
            <TagTools>
              <TagTool aria-label="Add tag" $gap={12}><PlusIcon /><Caret w={5} color="#777" /></TagTool>
              <TagTool aria-label="Search tags" $gap={16}><MagnifierIcon /></TagTool>
              <TagTool aria-label="Refresh tags" $gap={9}><RefreshIcon /></TagTool>
              <SelectWrap $h={29} $pr={7}>
                <Select aria-label="Tag provider"><option>default</option></Select>
                <Caret w={8} color={c.icon} />
              </SelectWrap>
              <MoreButton aria-label="More"><DotsIcon /><Caret w={5} color="#777" /></MoreButton>
            </TagTools>
            <Tabs role="tablist">
              <Tab role="tab" aria-selected="true" $on>Tags</Tab>
              <Tab role="tab" aria-selected="false">UDT Definitions</Tab>
            </Tabs>
            <TagArea>
              <TagTable>
                <thead>
                  <tr><TagHead $w={156}>Tag</TagHead><TagHead>Value</TagHead></tr>
                </thead>
                <tbody>
                  <tr><TagCell $h={8} /><TagCell $h={8} /></tr>
                  <tr>
                    <TagCell $on>
                      <TagName>
                        <Caret dir="right" color="#fff" /><TagDash /><ClosedFolderIcon />Random
                      </TagName>
                    </TagCell>
                    <TagCell />
                  </tr>
                  <tr>
                    <TagCell>
                      <TagName>
                        <Caret dir="right" color="#86a0b8" /><TagDash /><TagIcon />
                        <TagText>myMemoryTag</TagText><ClockIcon />
                      </TagName>
                    </TagCell>
                    <TagCell $right>0</TagCell>
                  </tr>
                </tbody>
              </TagTable>
            </TagArea>
          </Panel>
        </LeftColumn>
        <Grip $w={9} />

        <Designer>
          <CanvasGrid>
            <Corner />
            <RulerTop>
              {marks.slice(0, 9).map((m) => (
                <TopMark key={m} $off={m >= 800} $hot={m === 400}>{m}</TopMark>
              ))}
            </RulerTop>
            <RulerLeft>
              {marks.map((m) => (
                <LeftMark key={m}><Upright>{m}</Upright></LeftMark>
              ))}
            </RulerLeft>
            <Workspace>
              <Artboard>
                <Chart />
                <Alarm>
                  <AlarmHead>
                    <JournalIcon />
                    <AlarmTitle>0 alarm events<br />Last 8 hours</AlarmTitle>
                    <RoundButton aria-label="Search"><MdSearch size={22} /></RoundButton>
                    <RoundButton aria-label="Filter"><MdFilterList size={22} /></RoundButton>
                    <RoundButton aria-label="Settings"><MdSettings size={18} /></RoundButton>
                  </AlarmHead>
                  <Filters>
                    <FilterCount>FILTERS (7):</FilterCount>
                    <Pager $w={22} $bg="#b0b0b0" aria-label="Previous filters">
                      <Svg width="5" height="8" fill="none" stroke="#fff" strokeWidth="1.500">
                        <path d="M4.500 .5L1 4l3.500 3.500" />
                      </Svg>
                    </Pager>
                    <Chips>
                      {chips.map(([label, tint]) => (
                        <Chip key={label} $tint={tint}>
                          {label}
                          <ChipClose aria-label={`Remove ${label}`}>
                            <CloseIcon size={8} color="#3f9fd8" />
                          </ChipClose>
                        </Chip>
                      ))}
                    </Chips>
                    <Pager $w={24} $bg="#9e9e9e" aria-label="Next filters">
                      <Svg width="5" height="8" fill="none" stroke="#fff" strokeWidth="1.500">
                        <path d="M.5 .5L4 4 .5 7.500" />
                      </Svg>
                    </Pager>
                    <RemoveWrap><RemoveButton>Remove All</RemoveButton></RemoveWrap>
                  </Filters>
                  <EventTable>
                    <thead>
                      <tr>
                        {columns.map(([label, w]) => (
                          <EventHead key={label} $w={w}>
                            <HeadLabel>{label}<SortIcon active={label === "Event State"} /></HeadLabel>
                          </EventHead>
                        ))}
                      </tr>
                    </thead>
                  </EventTable>
                  <Empty><MdSearch size={18} />No results found</Empty>
                  <AlarmFoot>
                    <SelectWrap $w={70} $h={26} $pr={4} $r={3} $line="#a0a0a0">
                      <Select aria-label="Rows per page" $size={11}><option>25 rows</option></Select>
                      <Caret w={8} color="#222" />
                    </SelectWrap>
                    <PageButton>1</PageButton>
                  </AlarmFoot>
                </Alarm>
                <TankRow><Tank /><Tank /></TankRow>
                <ControlRow>
                  <Range type="range" defaultValue="0" aria-label="Slider" />
                  <Meter value="50" max="100" aria-label="Progress" />
                </ControlRow>
              </Artboard>
            </Workspace>
          </CanvasGrid>
          <ViewTabs>
            <HomeTab aria-label="Perspective home"><PerspectiveIcon /></HomeTab>
            <ViewTab>
              <CubeIcon />myView<TabClose><CloseIcon size={7} color="#222" w={2} /></TabClose>
            </ViewTab>
          </ViewTabs>
        </Designer>
        <Grip $w={6} />

        <RightColumn>
          <Panel $flex="1" $w={324}>
            <Header title="Perspective Property Editor" />
            <FilterRow $pad="7px 5px" $bg={c.chrome}>
              <FilterBox $h={26}>
                <FilterSearchIcon />
                <FilterInput aria-label="Filter properties" placeholder="Filter" />
              </FilterBox>
            </FilterRow>
            <ScrollFrame>
              <Props>
                <PropsHead><Caret w={10} color="#a3a3a3" />PROPS</PropsHead>
                <PropsBody>
                  {props.map((item, i) => (
                    <Property key={i} item={item} id={`prop-${i}`} />
                  ))}
                </PropsBody>
              </Props>
              <Scroll before={0} thumb={343} after={400} />
            </ScrollFrame>
          </Panel>
        </RightColumn>
        <Side>
          <SideTab><PaletteIcon /><SideText>Perspective Components</SideText></SideTab>
        </Side>
      </Main>

      <StatusBar>
        <WindowsIcon />
        <StatusText>
          Project saved. (8:57:03 AM - took 202 ms to commit changes, and 40 ms to push to Gateway)
        </StatusText>
        <StatusItem>80%</StatusItem>
        <StatusItem>369 / 1024 mb</StatusItem>
        <StatusItem>Trial Mode: 01:10:41<ServerIcon /></StatusItem>
      </StatusBar>
    </Shell>
  );
}
